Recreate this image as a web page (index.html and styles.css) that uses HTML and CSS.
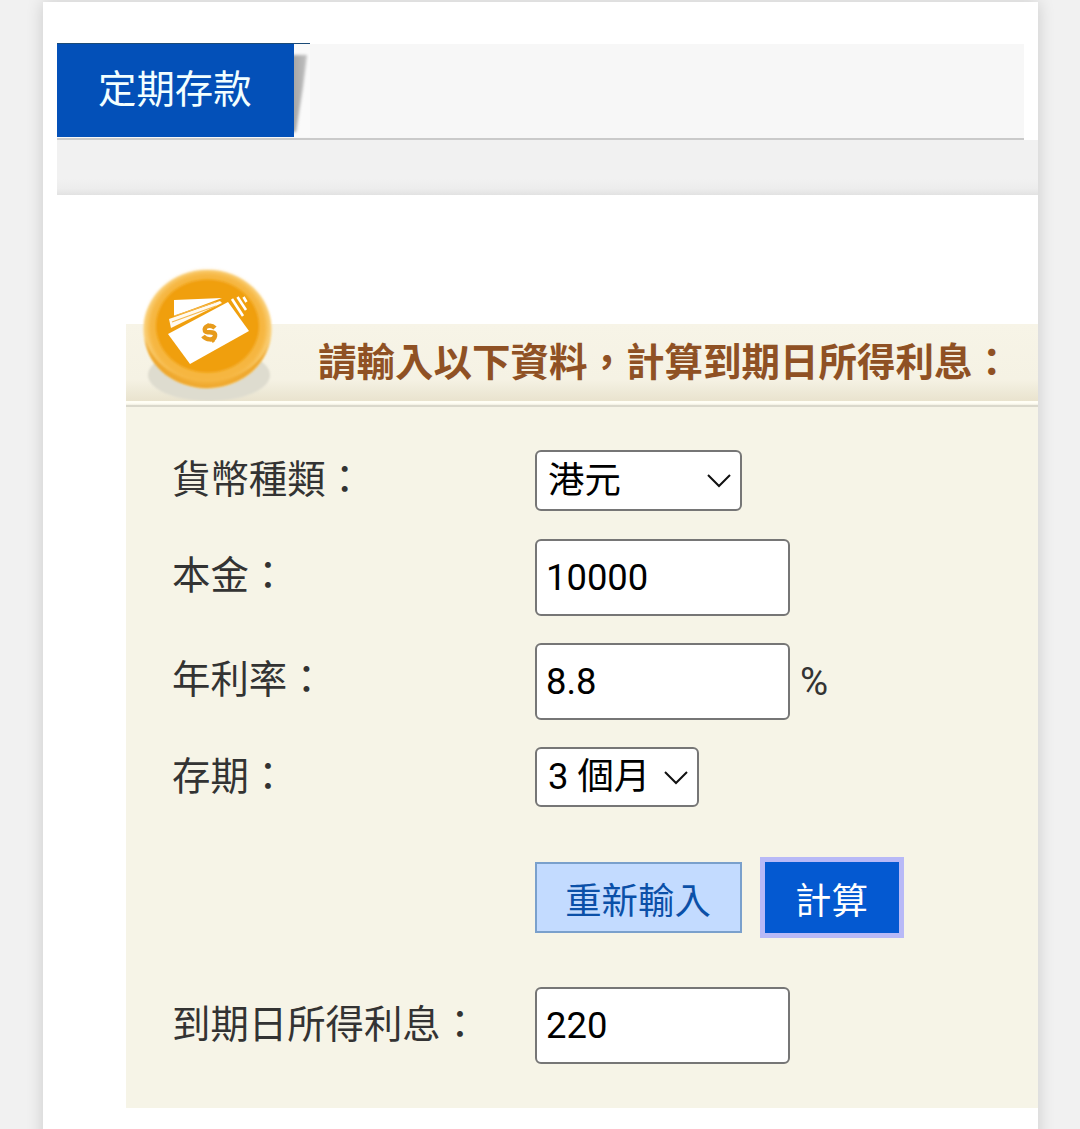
FILE: index.html
```html
<!DOCTYPE html>
<html lang="zh-Hant">
<head>
    <meta charset="utf-8">
    <title>定期存款</title>
    <link rel="stylesheet" href="styles.css">
</head>

<body>
    <div class="page">
        <div class="tabs">
            <div class="tab">
                <span class="tab-text">定期存款</span>
                <svg class="tab-shadow" width="16" height="93" viewBox="0 0 16 93">
                    <defs>
                        <linearGradient id="fold" x1="0" y1="0" x2="1" y2="0">
                            <stop offset="0" stop-color="#a2a2a2"/>
                            <stop offset="1" stop-color="#c0c0c0"/>
                        </linearGradient>
                        <filter id="soft"><feGaussianBlur stdDeviation="1.4"/></filter>
                    </defs>
                    <rect width="16" height="93" fill="#fafafa"/>
                    <path d="M-3 11H13L9 43L2 88H-3Z" fill="url(#fold)" filter="url(#soft)"/>
                </svg>
            </div>
        </div>
        <div class="band"></div>

        <div class="calculator">
            <div class="banner">
                <svg class="coin" width="138" height="136" viewBox="0 0 138 136">
                    <defs>
                        <filter id="blur"><feGaussianBlur stdDeviation="1.2"/></filter>
                        <filter id="blur2"><feGaussianBlur stdDeviation="2.5"/></filter>
                        <filter id="blur3"><feGaussianBlur stdDeviation="0.6"/></filter>
                    </defs>
                    <ellipse cx="69" cy="110" rx="61" ry="26" fill="#dedccf" filter="url(#blur)"/>
                    <ellipse cx="67.500" cy="64" rx="64" ry="59" fill="#fad27e" filter="url(#blur)"/>
                    <path d="M5 73C8 105 37 122 67 123C97 122 125 105 130 73C125 98 98 115 67 115S12 98 5 73Z" fill="#eda52c" filter="url(#blur)"/>
                    <ellipse cx="67.500" cy="63" rx="60" ry="56" fill="#f6b641" filter="url(#blur2)"/>
                    <ellipse cx="67.500" cy="61" rx="51.500" ry="46.500" fill="#f09f0f" filter="url(#blur)"/>
                    <g filter="url(#blur3)">
                        <path d="M34 35L82 33L34 51Z" fill="#fff"/>
                        <path d="M29 54L80 36L82 38L31 63Z" fill="#fffaf0"/>
                        <path d="M34 51L76 37M32 57L76 41" stroke="#f4b850" stroke-width="1.300"/>
                        <path d="M28 69L88 37L109 66L50 99Z" fill="#fff"/>
                        <path d="M92 34L103 51M97.500 32L106 45M103.500 32L106.500 37" fill="none" stroke="#fff" stroke-width="2.600"/>
                        <path d="M75 63C71 59 63 61 65 66C67 69 76 65 75 71C74 76 66 75 63 71" fill="none" stroke="#e79b1b" stroke-width="4.500"/>
                        <path d="M67 59L70 62M71 73L74 77" stroke="#e79b1b" stroke-width="3"/>
                    </g>
                </svg>
                <h1>請輸入以下資料，計算到期日所得利息：</h1>
            </div>

            <form id="depositForm">
                <div class="row row-select">
                    <label for="currency">貨幣種類：</label>
                    <div class="select currency">
                        <select id="currency">
                            <option>港元</option>
                        </select>
                        <svg class="arrow" width="26" height="16" viewBox="0 0 26 16"><path d="M2 2L13 13L24 2"/></svg>
                    </div>
                </div>
                <div class="row">
                    <label class="raised" for="principal">本金：</label>
                    <input type="text" id="principal" value="10000">
                </div>
                <div class="row">
                    <label class="raised" for="rate">年利率：</label>
                    <input type="text" id="rate" value="8.8">
                    <span class="unit">%</span>
                </div>
                <div class="row row-select">
                    <label for="period">存期：</label>
                    <div class="select period">
                        <select id="period">
                            <option>3 個月</option>
                        </select>
                        <svg class="arrow" width="26" height="16" viewBox="0 0 26 16"><path d="M2 2L13 13L24 2"/></svg>
                    </div>
                </div>
                <div class="buttons">
                    <button type="reset" class="reset">重新輸入</button>
                    <button type="button" class="submit">計算</button>
                </div>
                <div class="row">
                    <label for="interest">到期日所得利息：</label>
                    <input type="text" id="interest" value="220">
                </div>
            </form>
        </div>
    </div>
</body>
</html>
```
FILE: styles.css
```css
* {
    box-sizing: border-box;
}

body {
    margin: 0;
    height: 1129px;
    padding-top: 2px;
    overflow: hidden;
    background: #f1f1f1;
    color: #333;
    font-family: Roboto, "Noto Sans CJK TC", sans-serif;
    font-size: 38.4px;
}

.page {
    width: 995px;
    height: 1150px;
    margin-left: 43px;
    padding: 41px 0 0 14px;
    background: #fff;
    box-shadow: 0 0 16px rgba(0, 0, 0, 0.16);
}

/* tab strip */
.tabs {
    width: 967px;
    height: 97px;
    background: linear-gradient(#fff 1px, #f7f7f7 1px);
    border-bottom: 2px solid #cacaca;
}

.tab {
    display: flex;
    width: 253px;
    height: 94px;
    border-top: 1px solid #1b4b77;
}

.tab-text {
    width: 237px;
    height: 93px;
    padding-left: 41px;
    background: #0350b8;
    color: #f2ffff;
    line-height: 91px;
    white-space: nowrap;
}

.tab-shadow {
    display: block;
}

.band {
    height: 55px;
    background: linear-gradient(#f1f1f1 70%, #ededed 88%, #e2e2e2);
}

/* calculator */
.calculator {
    margin: 129px 0 0 69px;
    height: 784px;
    background: #f6f4e7;
}

.banner {
    position: relative;
    height: 83px;
    padding-left: 192px;
    border-bottom: 2px solid #dad8cc;
    background: linear-gradient(#f7f4e7 0, #f5f2e4 55px, #e9e3ce 77px, #fffef5 77px, #fffef5 79px, #f1efe2 81px);
}

.coin {
    position: absolute;
    left: 14px;
    top: -59px;
}

h1 {
    margin: 0;
    color: #8f5124;
    font-size: 38.5px;
    font-weight: bold;
    line-height: 77px;
    white-space: nowrap;
}

form {
    display: flex;
    flex-direction: column;
    gap: 27px;
    padding: 43px 0 0 46px;
}

.row {
    display: flex;
    align-items: center;
    height: 77px;
}

.row-select {
    height: 60px;
}

.row-select:first-child {
    height: 61px;
    margin-bottom: 1px;
}

label {
    width: 363px;
    padding-bottom: 1px;
    line-height: 56px;
    white-space: nowrap;
}

.raised {
    padding-bottom: 4px;
}

input,
select {
    border: 2px solid #767676;
    border-radius: 6px;
    background: #fff;
    color: #000;
    font-family: inherit;
    font-size: 36.4px;
}

input {
    width: 255px;
    height: 77px;
    padding: 0 9px;
}

.select {
    position: relative;
    height: 100%;
}

select {
    width: 100%;
    height: 100%;
    padding: 0 0 1px 11px;
    appearance: none;
}

.currency {
    width: 207px;
}

.period {
    width: 164px;
}

.arrow {
    position: absolute;
    right: 10px;
    top: 23px;
    fill: none;
    stroke: #111;
    stroke-width: 2;
}

.unit {
    margin-left: 10px;
    padding-bottom: 1px;
    font-size: 38.4px;
}

.buttons {
    display: flex;
    gap: 23px;
    margin: 28px 0 27px 363px;
}

button {
    height: 71px;
    padding: 0 1px 0 0;
    font-family: inherit;
    font-size: 36.4px;
}

.reset {
    width: 207px;
    border: 2px solid #7aa0cc;
    background: #c3dbff;
    color: #0b50a8;
}

.submit {
    width: 134px;
    border: 0;
    outline: 5px solid #b8b9f7;
    background: #0459d1;
    color: #fff;
}
```
